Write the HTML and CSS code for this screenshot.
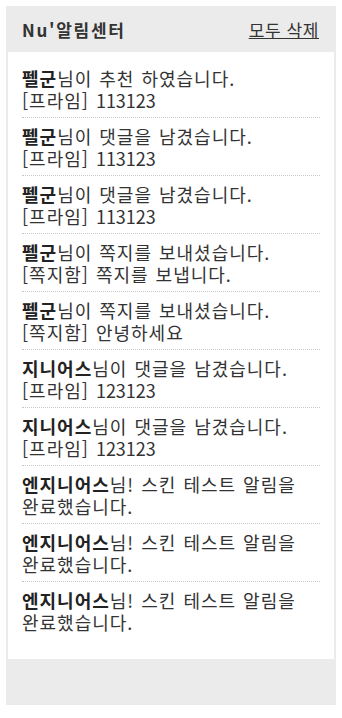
FILE: index.html
```html
<!DOCTYPE html>
<html lang="ko">
<head>
<meta charset="utf-8">
<link rel="stylesheet" href="styles.css">
</head>
<body>
<div class="panel">
  <div class="head">
    <span class="title">Nu'알림센터</span>
    <a class="clear" href="#">모두 삭제</a>
  </div>
  <ul class="list">
    <li><b>펠군</b>님이 추천 하였습니다.<br>[프라임] <span class="num">113123</span></li>
    <li><b>펠군</b>님이 댓글을 남겼습니다.<br>[프라임] <span class="num">113123</span></li>
    <li><b>펠군</b>님이 댓글을 남겼습니다.<br>[프라임] <span class="num">113123</span></li>
    <li><b>펠군</b>님이 쪽지를 보내셨습니다.<br>[쪽지함] 쪽지를 보냅니다.</li>
    <li><b>펠군</b>님이 쪽지를 보내셨습니다.<br>[쪽지함] 안녕하세요</li>
    <li><b>지니어스</b>님이 댓글을 남겼습니다.<br>[프라임] <span class="num">123123</span></li>
    <li><b>지니어스</b>님이 댓글을 남겼습니다.<br>[프라임] <span class="num">123123</span></li>
    <li><b>엔지니어스</b>님! 스킨 테스트 알림을 완료했습니다.</li>
    <li><b>엔지니어스</b>님! 스킨 테스트 알림을 완료했습니다.</li>
    <li><b>엔지니어스</b>님! 스킨 테스트 알림을 완료했습니다.</li>
  </ul>
  <div class="foot"></div>
</div>
</body>
</html>
```

FILE: styles.css
```css
html, body {
  margin: 0;
  padding: 0;
  background: #fff;
}
body {
  padding: 6px;
  font-family: "Noto Sans CJK KR", "Noto Sans", sans-serif;
  color: #333;
}
.panel {
  width: 330px;
  height: 699px;
  box-sizing: border-box;
  background: #ebebeb;
  padding: 0 2px;
  display: flex;
  flex-direction: column;
}
.head {
  height: 46px;
  flex: none;
  display: flex;
  align-items: center;
  justify-content: space-between;
  padding: 0 15px 0 14px;
}
.title {
  font-size: 17px;
  font-weight: bold;
  letter-spacing: 1.7px;
  color: #333;
}
.clear {
  font-size: 17px;
  color: #333;
  text-decoration: underline;
  letter-spacing: 0.6px;
}
.list {
  list-style: none;
  margin: 0;
  padding: 8px 14px 0;
  background: #fff;
  flex: 1;
}
.list li {
  font-size: 18px;
  line-height: 22px;
  letter-spacing: 1px;
  word-spacing: 1px;
  word-break: keep-all;
  padding: 7px 0 6px;
  border-bottom: 1px dotted #c8c8c8;
}
.list li:last-child {
  border-bottom: none;
}
.list b {
  font-weight: bold;
  color: #222;
}
.list .num {
  letter-spacing: 0;
}
.foot {
  height: 46px;
  flex: none;
}
```
